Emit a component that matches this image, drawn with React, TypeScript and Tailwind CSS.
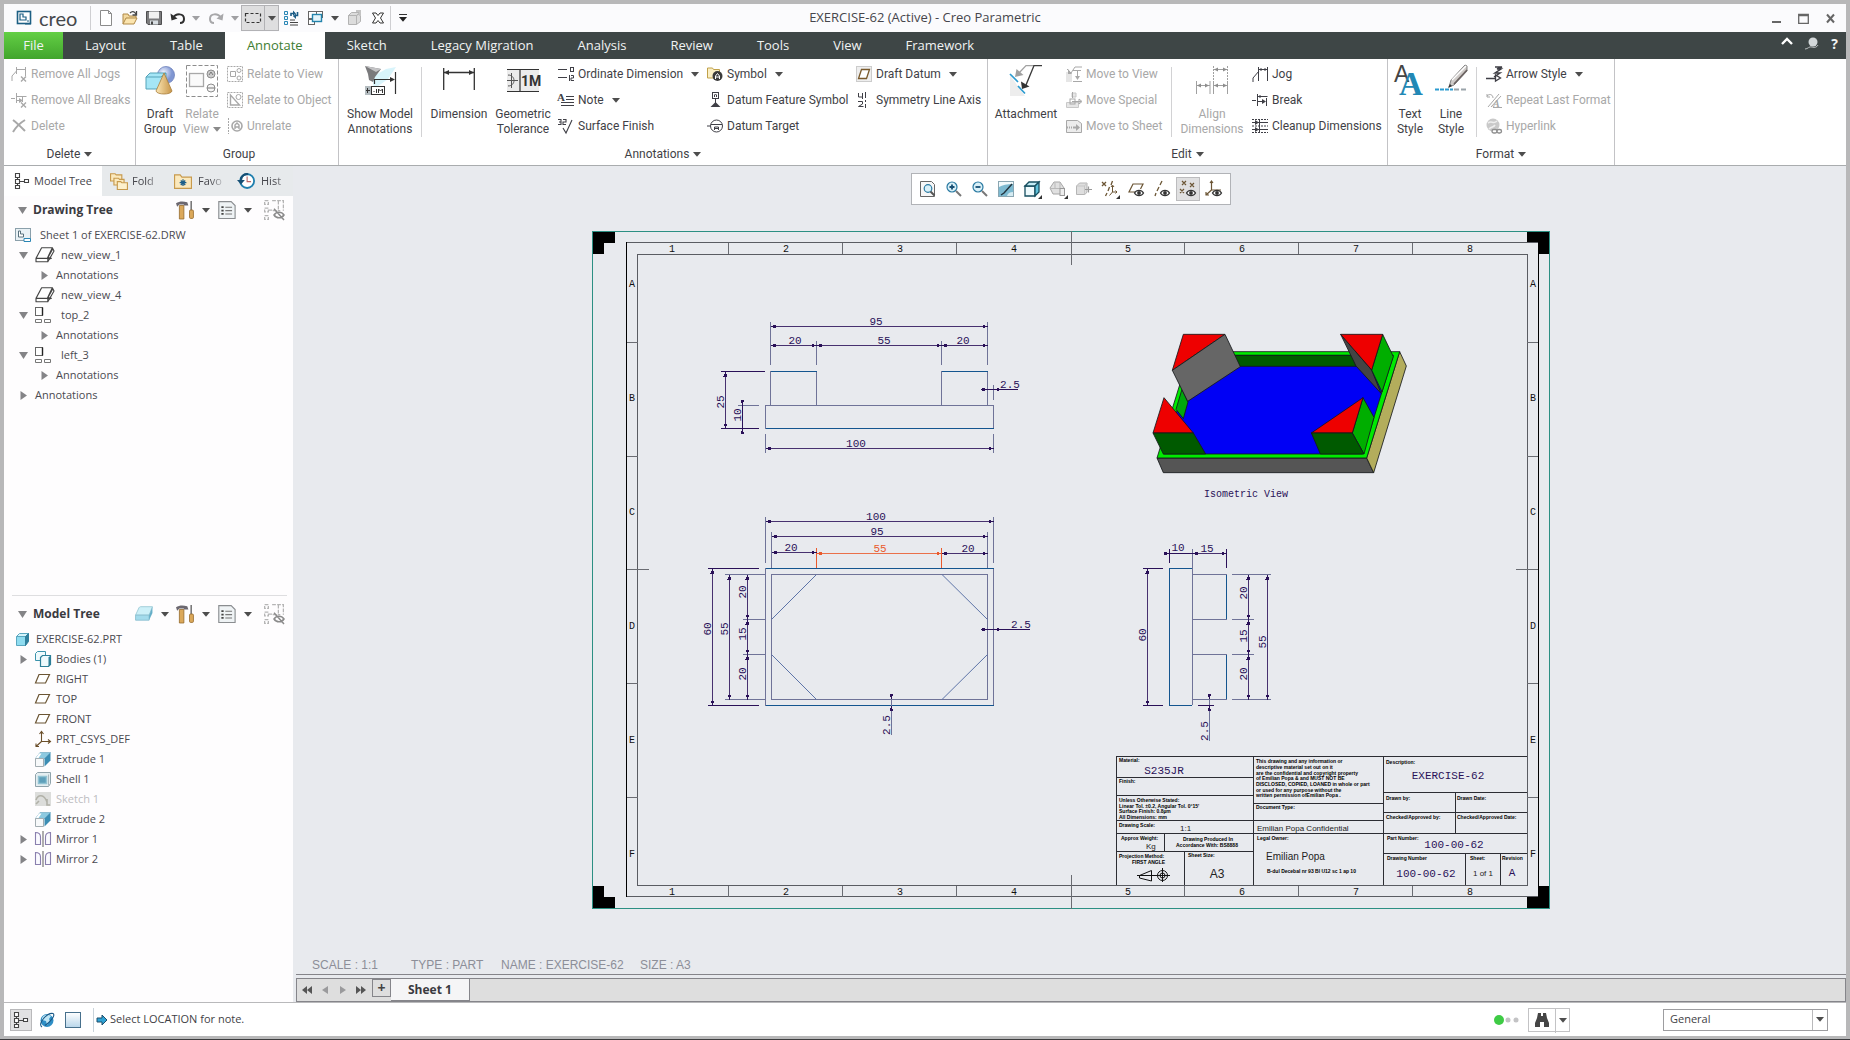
import { type ReactNode } from "react";
import clsx from "clsx";

const INK = "#2a1158";
const EDGE = "#14558f";
const THIN = "#6f7398";

/* ---------- small icons (16 x 16) ---------- */

const small: Record<string, ReactNode> = {
  logo: (
    <>
      <rect x="1.5" y="1.5" width="13" height="12" fill="#fff" stroke="#1d5f84" strokeWidth="1.6" />
      <path d="M4 4v6h6V7H7V4zM9 14h6M11 11h2" fill="none" stroke="#1d5f84" strokeWidth="1.2" />
    </>
  ),
  newFile: (
    <path d="M2.500.500h8l3 3v12h-11zM10.500.500v3h3" fill="#fff" stroke="#8b8b8b" />
  ),
  open: (
    <>
      <path d="M1 14V4h5l1 2h7v3" fill="#f3d9a0" stroke="#b08a48" />
      <path d="M1 14l3-6h11l-3 6z" fill="#fbe4ae" stroke="#b08a48" />
      <path d="M8 3c2-2 4-2 6 1M14.500 1v4h-4" fill="none" stroke="#444" strokeWidth="1.3" />
    </>
  ),
  save: (
    <>
      <path d="M.5 1.500h15v13H2l-1.500-1.500z" fill="#7b7b7d" stroke="#4e4e50" />
      <rect x="3" y="1.500" width="10" height="7" fill="#f1f1f1" />
      <rect x="4" y="10.500" width="8" height="4" fill="#d7dde2" />
      <rect x="5" y="11.500" width="2" height="3" fill="#444" />
    </>
  ),
  undo: (
    <>
      <path d="M3 8c3-5 11-5 11 1 0 3-2 4-4 4" fill="none" stroke="#2f2f2f" strokeWidth="2" />
      <path d="M.5 3.500l1 7 6-2z" fill="#2f2f2f" />
    </>
  ),
  redo: (
    <>
      <path d="M13 8C10 3 2 3 2 9c0 3 2 4 4 4" fill="none" stroke="#a8a8aa" strokeWidth="2" />
      <path d="M15.500 3.500l-1 7-6-2z" fill="#a8a8aa" />
    </>
  ),
  marquee: (
    <rect x=".5" y="3.500" width="15" height="9" fill="none" stroke="#333" strokeWidth="1.200" strokeDasharray="3 2" />
  ),
  regen: (
    <>
      <path d="M1.500 1.500h3v3h-3zM1.500 6.500h3v3h-3zM1.500 11.500h3v3h-3z" fill="#eef7fb" stroke="#2a86b5" />
      <path d="M7 12.500h8M7 15h8M7 10h5" stroke="#444" />
      <path d="M8 6V3.500h3M14.500 2v3.500H12" fill="none" stroke="#1b5c86" strokeWidth="1.600" />
      <path d="M10 .5l3 3-3 3zM13 3l-3 3 3 3z" fill="#1b5c86" />
    </>
  ),
  windows: (
    <>
      <rect x="1.500" y="1.500" width="8" height="7" fill="#fff" stroke="#666" />
      <rect x="1.500" y="9.500" width="6" height="5" fill="#fff" stroke="#666" />
      <rect x="9.500" y="1.500" width="6" height="6" fill="#fff" stroke="#666" />
      <rect x="5.500" y="4.500" width="9" height="7" fill="#e3f4fa" stroke="#2384ac" strokeWidth="1.400" />
    </>
  ),
  boxGray: (
    <>
      <path d="M1.500 5.500h8v9h-8zM1.500 5.500l3-3h9l-4 3zM9.500 5.500l4-3v9l-4 3" fill="#dcdcdc" stroke="#b3b3b3" />
      <path d="M9 1h4v5" fill="none" stroke="#c4c4c4" strokeWidth="2" />
    </>
  ),
  closeWin: (
    <path d="M2.500 3h3.500l2 2.500L10 3h3.500L10.500 8l3 5H10L8 10.500 6 13H2.500l3-5z" fill="#fff" stroke="#333" />
  ),
  jogs: (
    <>
      <path d="M5.500 1v7M14.500 1v9M5.500 3.500h9M1 15V10l4.500-5" fill="none" stroke="currentColor" />
      <path d="M10 10.500l5 5M15 10.500l-5 5" stroke="currentColor" strokeWidth="1.400" />
    </>
  ),
  breaks: (
    <>
      <path d="M0 6.500h4M5.500 1v10M11.500 4v6M5.500 4.500h10M6 8.500h4" fill="none" stroke="currentColor" />
      <path d="M8 6l4 2.500L8 11z" fill="currentColor" />
      <path d="M10 10.500l5 5M15 10.500l-5 5" stroke="currentColor" strokeWidth="1.400" />
    </>
  ),
  cross: <path d="M2 2c4 3 8 7 12 11M14 2C9 5 5 9 2 14" fill="none" stroke="currentColor" strokeWidth="2" />,
  relView: (
    <>
      <rect x=".5" y=".5" width="15" height="15" fill="none" stroke="currentColor" strokeDasharray="2 1" />
      <path d="M3.500 5.500h5v5h-5z" fill="none" stroke="currentColor" />
      <circle cx="12" cy="4.500" r="2" fill="none" stroke="currentColor" />
      <circle cx="12" cy="12" r="2" fill="none" stroke="currentColor" />
    </>
  ),
  relObj: (
    <>
      <rect x=".5" y=".5" width="15" height="15" fill="none" stroke="currentColor" strokeDasharray="2 1" />
      <path d="M3.500 3v10h9z" fill="none" stroke="currentColor" strokeWidth="1.400" />
      <circle cx="11.500" cy="5" r="2.500" fill="none" stroke="currentColor" />
    </>
  ),
  unrelate: (
    <>
      <path d="M1.500 0v16" stroke="currentColor" strokeDasharray="2 1" />
      <circle cx="10" cy="8" r="5" fill="none" stroke="currentColor" strokeWidth="1.600" />
      <path d="M8 11V7l2-2 2 2v4M8 9h4" fill="none" stroke="currentColor" strokeWidth="1.400" />
    </>
  ),
  ordinate: (
    <>
      <path d="M0 3.500h9M0 11.500h9" stroke="currentColor" />
      <rect x="12.500" y="1.500" width="3" height="4" fill="none" stroke="currentColor" />
      <path d="M11.500 9v6M13 9.500h2.500v2.500H13v2.500h3" fill="none" stroke="currentColor" />
    </>
  ),
  note: (
    <>
      <text x="-1" y="9" fontSize="11" fontWeight="700" fontFamily="Liberation Serif, serif" fill="currentColor">A</text>
      <path d="M8 4.500h8M8 7.500h8M3 10.500h13M3 13.500h13" stroke="currentColor" />
    </>
  ),
  surface: (
    <>
      <path d="M0 1.500h3v5H0M1 4h2M5 1.500h3V4H5v2.500h3M5 10l3 5 6-13" fill="none" stroke="currentColor" strokeWidth="1.100" />
    </>
  ),
  symbol: (
    <>
      <path d="M.5 12V2h5l1 1.500h6V12z" fill="#fbefc4" stroke="#c0a14a" />
      <circle cx="10.500" cy="10" r="5" fill="#3b3b3b" />
      <path d="M8.500 13v-3l2-2.500 2 2.500v3M8.500 11h4" fill="none" stroke="#fff" />
    </>
  ),
  datumFeature: (
    <>
      <rect x="5.500" y=".5" width="6" height="6" fill="none" stroke="currentColor" />
      <path d="M8.500 7v4M7.500 5V3l1-1 1 1v2" stroke="currentColor" fill="none" />
      <path d="M8.500 10l5 5h-10z" fill="currentColor" />
    </>
  ),
  datumTarget: (
    <>
      <circle cx="9.500" cy="8" r="6" fill="none" stroke="currentColor" />
      <path d="M0 8h3M4 6.500h11M7.500 12V9h4v3M7.500 10.500h4" fill="none" stroke="currentColor" />
    </>
  ),
  draftDatum: (
    <>
      <rect x=".5" y=".5" width="15" height="15" fill="#eee" stroke="#ccc" />
      <path d="M5.500 3.500h8l-3 9h-8z" fill="#fff" stroke="#7a5a2c" strokeWidth="1.300" />
    </>
  ),
  symmetry: (
    <>
      <path d="M2.500 1v4h4M6.500 1v6M2 9.500h4.500V12l-4 2.500h5" fill="none" stroke="currentColor" />
      <path d="M9.500 0v16" stroke="currentColor" strokeDasharray="6 2 2 2" />
    </>
  ),
  moveView: (
    <>
      <path d="M0 6h6v10H0z" fill="#e6e6e6" />
      <path d="M1 3l4 4 4-6h7M7 4.500h8M11.500 5v8M7 15.500h9" fill="none" stroke="currentColor" />
      <path d="M9 10h5l-2.500 4zM2 3v5h4z" fill="currentColor" />
    </>
  ),
  moveSpecial: (
    <>
      <path d="M.5 10.500h12v5H.5zM6 1l4 0v4H6z" fill="#e6e6e6" stroke="#c8c8c8" />
      <rect x="4" y="7" width="5" height="5" fill="none" stroke="currentColor" />
      <path d="M6.500 0v6M6 9.500h9M13 7l3 2.500L13 12z" fill="none" stroke="currentColor" />
    </>
  ),
  moveSheet: (
    <>
      <path d="M.5 2.500h11l4 3v9H.5z" fill="#ececec" stroke="currentColor" />
      <path d="M1 9.500h6" stroke="currentColor" strokeWidth="2" strokeDasharray="1 1" />
      <path d="M7 8.500h3V6l4 3.500-4 3.500v-2.500H7z" fill="currentColor" />
    </>
  ),
  jog: <path d="M6.500 1v14M15.500 1v14M6.500 3.500h9M9 2v3M13 2v3M1 16v-4l6-7" fill="none" stroke="currentColor" />,
  breakIcon: (
    <>
      <path d="M0 8.500h4M5.500 2v12M5.500 4.500h10M8 3v3M14.500 6v8M6 9.500h4" fill="none" stroke="currentColor" />
      <path d="M10 7l4 2.500-4 2.500z" fill="currentColor" />
    </>
  ),
  cleanup: (
    <>
      <path d="M0 4.500h16M0 11.500h16M7.500 1v14" stroke="currentColor" />
      <path d="M0 1.500h16M0 8h16M0 14.500h16" stroke="currentColor" strokeDasharray="2 1" />
      <path d="M3 2l4 2.500L3 7zM3 9l4 2.500L3 14z" fill="currentColor" />
    </>
  ),
  arrowStyle: (
    <>
      <path d="M0 12.500h9M9.500 9v6l5-3z" fill="none" stroke="currentColor" strokeWidth="1.300" />
      <path d="M9 1h7l-5 2h4l-6 4h5l-6 4" fill="none" stroke="currentColor" strokeWidth="1.500" />
    </>
  ),
  repeat: (
    <>
      <path d="M1 2v3h3M1 4c3-3 6-1 6 2M2 15L13 2M5 15L15 4" fill="none" stroke="currentColor" />
      <text x="7" y="15" fontSize="10" fontStyle="italic" fontWeight="700" fontFamily="Liberation Serif, serif" fill="currentColor">A</text>
      <path d="M7 15.500h9" stroke="currentColor" />
    </>
  ),
  hyperlink: (
    <>
      <circle cx="7" cy="7" r="6.500" fill="#c9c9c9" />
      <path d="M2 5c4-3 5 2 9-2M3 11c3-3 4-1 6-4" stroke="#eee" fill="none" strokeWidth="1.600" />
      <rect x="6" y="11.500" width="5" height="3.500" rx="1.700" fill="#fff" stroke="#8f8f8f" strokeWidth="1.400" />
      <rect x="11" y="11.500" width="4.500" height="3.500" rx="1.700" fill="#fff" stroke="#8f8f8f" strokeWidth="1.400" />
    </>
  ),
  tree: (
    <path d="M1.500.500h4v4h-4zM1.500 6.500h4v4h-4zM1.500 12.500h4v3h-4zM10.500 6.500h4v3h-4zM3.500 4.500v2M3.500 10.500v2M5.500 8.500h5" fill="#fff" stroke="#444" strokeWidth="1.100" />
  ),
  folders: (
    <>
      <path d="M.5 8V1.500h4l1 1h5V8z" fill="#fbe9bd" stroke="#c79a4d" />
      <path d="M3.500 11.500v-6h4l1 1h4v5z" fill="#fbe9bd" stroke="#c79a4d" />
      <path d="M6.500 15.500v-7h3l1 1h5v6z" fill="#fdf0cc" stroke="#c79a4d" />
    </>
  ),
  favorite: (
    <>
      <path d="M.5 14.500v-12h5l1.500 2h8.500v10z" fill="#fbe9bd" stroke="#c79a4d" />
      <path d="M8 6.500v6M5 9.500h6M6 7.500l4 4M10 7.500l-4 4" stroke="#1c5f8a" strokeWidth="1.100" />
    </>
  ),
  history: (
    <>
      <circle cx="9" cy="8" r="6.200" fill="#fff" stroke="#1f7fae" strokeWidth="1.600" />
      <path d="M9 4v4.500h3.500" fill="none" stroke="#b66" />
      <path d="M0 7l3.500 4L7 7z" fill="#174f74" />
      <path d="M3.500 7C4 3 7 1.500 10 2" fill="none" stroke="#174f74" strokeWidth="2" />
    </>
  ),
  hammer: (
    <>
      <path d="M0 2c3-2 6-2 10-1l1 3H7V3H3L1 5z" fill="#6c6870" />
      <path d="M3 4h4v12H3z" fill="#dba85a" stroke="#94682b" strokeWidth=".7" />
      <path d="M13.500 0v8" stroke="#777" strokeWidth="1.400" />
      <rect x="12" y="8" width="3.500" height="7.500" rx="1" fill="#dba85a" stroke="#94682b" strokeWidth=".7" />
    </>
  ),
  listDoc: (
    <>
      <path d="M.7.500h11l3.500 3.500v11.500H.7z" fill="#eff3f5" stroke="#8a8d90" />
      <path d="M6.500 5.500h6M6.500 8.500h6M6.500 11.500h6" stroke="#777" />
      <path d="M3 5.500h2M3 8.500h2M3 11.500h2" stroke="#444" strokeWidth="1.600" />
    </>
  ),
  treeHide: (
    <>
      <path d="M.5.500h3v3h-3zM.5 6.500h3v3h-3zM.5 12.500h3v3h-3zM3.500 8h4M6.500.500h9v8M11.500.500v8M7 8.500h6" fill="none" stroke="#b5b5b5" strokeDasharray="3 1" />
      <path d="M8 12c2-3 6-3 8 0-2 3-6 3-8 0zM8 7l8 9" fill="none" stroke="#8b8b8b" strokeWidth="1.200" />
    </>
  ),
  sheet: (
    <>
      <rect x=".5" y="1.500" width="15" height="12" fill="#e9f1f5" stroke="#8ba0ab" />
      <path d="M3.500 4v6h5V7h-3V4z" fill="#fff" stroke="#58707c" />
      <path d="M9 14.500v-3h6.500v3z" fill="#fff" stroke="#2a86b5" />
    </>
  ),
  view3d: (
    <path d="M0 11l5-9.500h9.500L10 11zM0 11v3h10.500V11M10.500 14l5.500-9.500-1.500-3M10.500 11l3.500 0M12.500 12L11 9.500 15 2.500" fill="#fff" stroke="#444" strokeLinejoin="round" />
  ),
  viewPlan: (
    <>
      <rect x=".5" y=".5" width="7" height="8" fill="#fff" stroke="#666" />
      <path d="M7.500.500v8" stroke="#222" strokeWidth="1.400" />
      <path d="M.5 12.500h6v3h-6zM9.500 12.500h6v3h-6z" fill="#fff" stroke="#777" />
    </>
  ),
  part: (
    <>
      <path d="M1.500 5.500h9v9h-9z" fill="#8fdcf0" stroke="#5aa7c0" />
      <path d="M1.500 5.500l3-3h9l-3 3z" fill="#d3f3fa" stroke="#5aa7c0" />
      <path d="M10.500 5.500l3-3v8l-3 4z" fill="#2f7f9c" stroke="#2f7f9c" />
    </>
  ),
  bodies: (
    <>
      <path d="M.5 2.500l2-2h8v9h-10z" fill="#eefafd" stroke="#3b93ab" />
      <path d="M5.500 6.500l2-2h8v9l-2 2h-8z" fill="#eefafd" stroke="#2d7f98" strokeWidth="1.200" />
      <path d="M13.500 6.500v9l2-2v-9z" fill="#2d7f98" />
    </>
  ),
  plane: <path d="M4 3.500h10.500l-4 8.500H.5z" fill="#fff" stroke="#6b5534" strokeWidth="1.200" />,
  csys: (
    <path d="M6.500 1v9.500H15M6.500 10.500L1 15.500M4.500 3l2-2.500 2 2.500M13 8.500l2.500 2-2.500 2M1 12.500v3h3" fill="none" stroke="#6b4f2a" strokeWidth="1.100" />
  ),
  extrude: (
    <>
      <path d="M.5 7.500l4.500-6h10.500l-6 6z" fill="#8cc9e0" stroke="#7fb4c9" strokeWidth=".8" />
      <path d="M9.500 7.500l6-6v8l-6 6z" fill="#3b8db3" />
      <path d="M.5 7.500h8v8h-8z" fill="#f7f9fa" stroke="#a3adb2" />
      <path d="M1 7l3-4.500h2.500L3.500 7z" fill="#fff" />
    </>
  ),
  shell: (
    <>
      <path d="M.5 3.500l2-2h13v11l-2 3H.5z" fill="#e4eef1" stroke="#8fa3ab" />
      <path d="M3.500 5.500h8v7h-8z" fill="#5e9fba" stroke="#91c3d3" strokeWidth="1.500" />
      <path d="M13.500 3.500v11" stroke="#a9b7bc" />
    </>
  ),
  sketch: (
    <>
      <rect x="0" y="1" width="16" height="14" fill="#dcdddb" />
      <path d="M1 9c2-6 8-6 11 2M12 8v6h3M1 13l3-3" fill="none" stroke="#b1b1a8" strokeWidth="1.600" />
    </>
  ),
  mirror: (
    <>
      <path d="M.5 1.500v12h5V6q0-4.500-5-4.500zM15.500 1.500v12h-5V6q0-4.500 5-4.500z" fill="#fafaff" stroke="#8a7fae" strokeWidth="1.100" />
      <path d="M8 0v16" stroke="#6b6b6b" strokeWidth="1.100" />
    </>
  ),
  layer: (
    <>
      <path d="M.5 9l3-6.500q.5-1 1.500-1h10.500L12.500 9z" fill="#cdf0f8" stroke="#9cc9d6" strokeWidth=".8" />
      <path d="M.5 9v4.500h12V9z" fill="#a3dbec" stroke="#8bc0d0" strokeWidth=".8" />
      <path d="M12.500 9l3-7.500V7l-3 6.500z" fill="#66afc8" />
    </>
  ),
  zoomFit: (
    <>
      <path d="M.5.500h11l3 3v12H.500z" fill="#f7f7f7" stroke="#666" />
      <circle cx="8" cy="7.500" r="3.800" fill="#d9f0f8" stroke="#2a7aa2" strokeWidth="1.200" />
      <path d="M10.500 10.500l4 4" stroke="#555" strokeWidth="2" />
    </>
  ),
  zoomIn: (
    <>
      <circle cx="6" cy="6" r="5" fill="#d9f0f8" stroke="#2a7aa2" strokeWidth="1.200" />
      <path d="M3.500 6h5M6 3.500v5" stroke="#174f74" strokeWidth="1.800" />
      <path d="M10 10l5 5" stroke="#777" strokeWidth="2" />
    </>
  ),
  zoomOut: (
    <>
      <circle cx="6" cy="6" r="5" fill="#d9f0f8" stroke="#2a7aa2" strokeWidth="1.200" />
      <path d="M3.500 6h5" stroke="#174f74" strokeWidth="1.800" />
      <path d="M10 10l5 5" stroke="#777" strokeWidth="2" />
    </>
  ),
  repaint: (
    <>
      <rect x=".5" y=".5" width="15" height="15" fill="#d5ebf2" stroke="#8aa6b2" />
      <path d="M1 5q6-3 14-3v9q-5 0-6 4H1z" fill="#5fa9c6" opacity=".75" />
      <path d="M1 1h14v2Q6 3 1 6z" fill="#f2fafc" />
      <path d="M14 3L6 12l-3 2" fill="none" stroke="#23353f" strokeWidth="1.500" />
    </>
  ),
  cube: (
    <>
      <path d="M1 5h10v10H1z" fill="#eefafd" stroke="#174f60" strokeWidth="1.300" />
      <path d="M1 5l4-4h10l-4 4z" fill="#c4ecf5" stroke="#174f60" strokeWidth="1.300" />
      <path d="M11 5l4-4v10l-4 4z" fill="#5fc1da" stroke="#174f60" strokeWidth="1.300" />
      <Corner />
    </>
  ),
  savedView: (
    <>
      <path d="M0 7l4-6h6l4 6-2 6H3z" fill="#e0e0e0" stroke="#a6a6a6" />
      <path d="M0 7.500h14M5 2v5M10 2v5" stroke="#b9b9b9" />
      <rect x="10" y="7.500" width="4.500" height="7" fill="#eee" stroke="#999" />
      <Corner />
    </>
  ),
  section: (
    <>
      <path d="M.5 5l3-3h7.500v9l-2 2.500H.5z" fill="#dedede" stroke="#b5b5b5" />
      <path d="M.5 5h8v8.500M8.500 5l2.500-3" fill="none" stroke="#c6c6c6" />
      <path d="M9 8.500h7M12.500 5.500v6" stroke="#999" strokeWidth="1.200" />
    </>
  ),
  datumFilter: (
    <>
      <path d="M0 1l4 4M4 1L0 5M10.500 0L9 4M7.500 6L6 10M5 12l-1.500 3" stroke="#6b5534" strokeWidth="1.300" />
      <path d="M10.500 5v6H15M10.500 11l-3 3.500M9 6l1.500-2L12 6M13.500 9.500L15 11l-1.500 1.500" fill="none" stroke="#6b5534" />
      <Corner />
    </>
  ),
  planeEye: (
    <>
      <path d="M12.500 8l2.500-5H5l-4 8h6" fill="none" stroke="#6b5534" strokeWidth="1.200" />
      <Eye />
    </>
  ),
  axisEye: (
    <>
      <path d="M8 0L6 4M5 6l-2 4M2 12l-1 3" stroke="#6b5534" strokeWidth="1.300" />
      <Eye />
    </>
  ),
  pointEye: (
    <>
      <path d="M2 0l4 4M6 0L2 4M10 2l4 4M14 2l-4 4M0 8l4 4M4 8l-4 4" stroke="#6b5534" strokeWidth="1.200" />
      <Eye />
    </>
  ),
  csysEye: (
    <>
      <path d="M5.500 0v9H15M5.500 9L0 14M4 2l1.500-2L7 2M0 11v3h3" fill="none" stroke="#6b5534" strokeWidth="1.200" />
      <Eye />
    </>
  ),
  globe: (
    <>
      <circle cx="8" cy="8.500" r="6.500" fill="#2f8fc6" />
      <path d="M3 6c2-4 6-4 9-2l-2 3 1 2-3 4-1-4-4-1z" fill="#bfe6f5" />
      <path d="M3 15C-2 12 8 .5 14 1.500c3 1.500-3 9-8 12" fill="none" stroke="#1c5a88" strokeWidth="1.100" />
    </>
  ),
  pane: (
    <>
      <defs>
        <linearGradient id="pane" x1="0" y1="0" x2="0" y2="1">
          <stop offset="0" stopColor="#fff" />
          <stop offset="1" stopColor="#b8d6ea" />
        </linearGradient>
      </defs>
      <rect x=".5" y=".5" width="15" height="15" fill="url(#pane)" stroke="#47708c" />
    </>
  ),
  binoculars: (
    <path d="M4 1h3v3h2V1h3l1 5 2 5v4h-5v-5H6v5H1v-4l2-5z" fill="#454545" />
  ),
};

function Corner() {
  return <path d="M18 14v4h-4z" fill="#333" />;
}

function Eye() {
  return (
    <>
      <path d="M6.500 12c2-3.500 7-3.500 9 0-2 3.500-7 3.500-9 0z" fill="#fff" stroke="#333" strokeWidth="1.300" />
      <circle cx="11" cy="12" r="1.900" fill="#333" />
    </>
  );
}

function Icon({ name, className = "size-4" }: { name: string; className?: string }) {
  return (
    <svg viewBox="0 0 16 16" className={clsx("shrink-0 overflow-visible", className)} aria-hidden="true">
      {small[name]}
    </svg>
  );
}

function Caret({ className = "text-[#4d4d4d]" }: { className?: string }) {
  return (
    <svg viewBox="0 0 8 5" className={clsx("h-[5px] w-2 shrink-0", className)} aria-hidden="true">
      <path d="M0 0h8L4 4.800z" fill="currentColor" />
    </svg>
  );
}

/* ---------- large ribbon icons (32 x 32) ---------- */

const large: Record<string, ReactNode> = {
  draftGroup: (
    <>
      <defs>
        <radialGradient id="ball" cx=".35" cy=".35">
          <stop offset="0" stopColor="#f2f5ff" />
          <stop offset="1" stopColor="#7f96d2" />
        </radialGradient>
        <linearGradient id="cone">
          <stop offset="0" stopColor="#fbe6b4" />
          <stop offset="1" stopColor="#c79548" />
        </linearGradient>
      </defs>
      <circle cx="22" cy="10" r="8.500" fill="url(#ball)" stroke="#6d82bb" strokeWidth=".8" />
      <path d="M2 12l4-4h16v12l-4 4H2z" fill="#a5e6f6" stroke="#55a3b9" />
      <path d="M2 12h15l5-4" fill="none" stroke="#55a3b9" />
      <path d="M20 8l8 18c-1 4-15 4-16 0z" fill="url(#cone)" stroke="#a97f3c" strokeWidth=".8" />
    </>
  ),
  relateView: (
    <>
      <rect x=".5" y=".5" width="31" height="31" fill="none" stroke="#8d8d8d" strokeDasharray="4 2" />
      <rect x="3.500" y="8.500" width="14" height="13" fill="#fafafa" stroke="#a8a8a8" strokeWidth="1.300" />
      <circle cx="25" cy="9" r="4" fill="#ccc" stroke="#8d8d8d" />
      <circle cx="25" cy="23" r="4" fill="#f4f4f4" stroke="#8d8d8d" />
      <path d="M23 10l2-3 2 3M21 23h8" fill="none" stroke="#777" />
    </>
  ),
  showModel: (
    <>
      <path d="M8 12L22 4l10-2-8 12-14 10z" fill="#c7effa" opacity=".7" />
      <path d="M1 1l16 3-6 8-2 5-4-2-1-6z" fill="#7a7a7c" />
      <path d="M1 1l16 3-5 3z" fill="#c3c3c5" />
      <path d="M31.500 7v22M10 14.500h20M10.500 14v5" stroke="#333" strokeWidth="1.200" />
      <path d="M26 12l5 2.500-5 2.500z" fill="#333" />
      <rect x="1.500" y="21.500" width="19" height="8" fill="#fff" stroke="#333" />
      <rect x="1" y="21" width="6" height="9" fill="#b4bcc0" />
      <path d="M7.500 21v9M10 27v-1M12.500 24v4M14.500 28v-4l2 2 2-2v4M3.500 23v5M2 25.500h4" stroke="#333" fill="none" />
    </>
  ),
  dimension: (
    <>
      <path d="M.7 3v22M31.300 3v22M1 7.500h30" stroke="#333" strokeWidth="1.300" />
      <path d="M1 7.500l5-2.500v5zM31 7.500L26 5v5z" fill="#333" />
    </>
  ),
  geomTol: (
    <>
      <rect x="0" y="4" width="32" height="22" fill="#ececec" />
      <path d="M0 4.500h32M0 26.500h32" stroke="#333" strokeWidth="1.200" />
      <path d="M13 5v21" stroke="#555" strokeWidth="1.500" />
      <path d="M0 15.500h11M4.500 8v15M1 10c8 0 8 11 0 11" fill="none" stroke="#555" />
      <text x="14" y="21" fontSize="14" fontWeight="700" fontFamily="Roboto, sans-serif" fill="#333">1M</text>
    </>
  ),
  attachment: (
    <>
      <path d="M0 10L15 31H0z" fill="#ededed" />
      <path d="M24 .6h-8L9 8" fill="none" stroke="#a2a2a2" strokeWidth="1.300" />
      <path d="M5 12l1.500-8 7 6z" fill="#a0a0a0" />
      <path d="M32 .6h-8L16 20" fill="none" stroke="#3c3c3c" strokeWidth="1.400" />
      <path d="M12 24l-1-7.500 8.500 5z" fill="#333" />
      <path d="M0 9l8 8M8 21l7 7.500" stroke="#2c9bd0" strokeWidth="1.700" />
    </>
  ),
  alignDim: (
    <>
      <path d="M.5 16v13M14 16v13M17.500 16v13M31.500 16v13" stroke="#a0a0a0" />
      <path d="M17.500 1v14M31.500 1v14" stroke="#a0a0a0" strokeDasharray="2 1" />
      <path d="M1 20.500h13M18 20.500h13M18 4.500h13" stroke="#a0a0a0" />
      <path d="M1 20.500l4-2v4zM13 20.500l-4-2v4zM18 20.500l4-2v4zM31 20.500l-4-2v4zM18 4.500l4-2v4zM31 4.500l-4-2v4z" fill="#8d8d8d" />
    </>
  ),
  textStyle: (
    <>
      <text x="0" y="17" fontSize="23" fontFamily="Liberation Sans, sans-serif" fill="#444">A</text>
      <text x="5" y="30" fontSize="33" fontWeight="700" fontFamily="Liberation Serif, serif" fill="#2288b5">A</text>
    </>
  ),
  lineStyle: (
    <>
      <path d="M0 24.500h18" stroke="#2c9bd0" strokeWidth="2" strokeDasharray="4 1" />
      <path d="M19 24.500h13" stroke="#9aa4aa" strokeWidth="2" strokeDasharray="5 2" />
      <path d="M14 22l2-7L30 0l2 1v5L19 20z" fill="#cfcbc8" stroke="#777" strokeWidth=".9" />
      <path d="M17 15L31 1" stroke="#fff" strokeWidth="1.500" />
      <path d="M19 19L32 5" stroke="#6b6260" strokeWidth="1.600" />
      <path d="M13 23l2-4 2 2z" fill="#333" />
    </>
  ),
};

/* ---------- ribbon ---------- */

type ToolProps = { icon: string; label: string; caret?: boolean; disabled?: boolean };

function Tool({ icon, label, caret, disabled }: ToolProps) {
  return (
    <button
      type="button"
      disabled={disabled}
      className={clsx(
        "flex h-[26px] items-center gap-1 text-left text-xs whitespace-nowrap",
        disabled ? "text-[#a8a8a8]" : "text-[#3f3f46]",
      )}
    >
      <Icon name={icon} />
      {label}
      {caret ? <span className="pl-1"><Caret /></span> : null}
    </button>
  );
}

function BigTool({ icon, lines, className, disabled, caret }: {
  icon: string;
  lines: string[];
  className: string;
  disabled?: boolean;
  caret?: boolean;
}) {
  return (
    <button
      type="button"
      disabled={disabled}
      className={clsx(
        "flex shrink-0 flex-col items-center self-start pt-1 text-xs leading-[15px] whitespace-nowrap",
        disabled ? "text-[#a8a8a8]" : "text-[#3f3f46]",
        className,
      )}
    >
      <svg viewBox="0 0 32 32" className="mb-2.5 size-8 overflow-visible" aria-hidden="true">
        {large[icon]}
      </svg>
      {lines.map((line, i) => (
        <span key={line} className="flex items-center gap-1">
          {line}
          {caret && i === lines.length - 1 ? <Caret className="text-[#8a8a8a]" /> : null}
        </span>
      ))}
    </button>
  );
}

function Group({ title, caret, className, children }: {
  title: string;
  caret?: boolean;
  className: string;
  children: ReactNode;
}) {
  return (
    <section className={clsx("flex shrink-0 flex-col border-r border-[#c3c3c6] pt-0.5", className)}>
      <div className="flex h-20">{children}</div>
      <button type="button" className="mt-[3px] flex h-5 items-center justify-center gap-1 text-xs text-[#3f3f46]">
        {title}
        {caret ? <Caret /> : null}
      </button>
    </section>
  );
}

function Divider({ className }: { className?: string }) {
  return <div className={clsx("mt-1.5 h-[70px] w-px shrink-0 bg-[#d2d2d4]", className)} />;
}

function Ribbon() {
  return (
    <div className="flex h-[107px] shrink-0 overflow-hidden border-b border-[#a9acae] bg-white font-['Roboto',sans-serif]">
      <Group title="Delete" caret className="w-[132px]">
        <div className="flex flex-col pl-[7px]">
          <Tool icon="jogs" label="Remove All Jogs" disabled />
          <Tool icon="breaks" label="Remove All Breaks" disabled />
          <Tool icon="cross" label="Delete" disabled />
        </div>
      </Group>
      <Group title="Group" className="w-[203px] pl-1">
        <BigTool icon="draftGroup" lines={["Draft", "Group"]} className="w-10" />
        <BigTool icon="relateView" lines={["Relate", "View"]} className="w-11" disabled caret />
        <div className="flex flex-col pl-[3px]">
          <Tool icon="relView" label="Relate to View" disabled />
          <Tool icon="relObj" label="Relate to Object" disabled />
          <Tool icon="unrelate" label="Unrelate" disabled />
        </div>
      </Group>
      <Group title="Annotations" caret className="w-[649px]">
        <BigTool icon="showModel" lines={["Show Model", "Annotations"]} className="w-[82px]" />
        <Divider />
        <BigTool icon="dimension" lines={["Dimension"]} className="w-[74px]" />
        <BigTool icon="geomTol" lines={["Geometric", "Tolerance"]} className="w-[54px]" />
        <div className="ml-2 flex w-[149px] flex-col">
          <Tool icon="ordinate" label="Ordinate Dimension" caret />
          <Tool icon="note" label="Note" caret />
          <Tool icon="surface" label="Surface Finish" />
        </div>
        <div className="flex w-[149px] flex-col">
          <Tool icon="symbol" label="Symbol" caret />
          <Tool icon="datumFeature" label="Datum Feature Symbol" />
          <Tool icon="datumTarget" label="Datum Target" />
        </div>
        <div className="flex flex-col">
          <Tool icon="draftDatum" label="Draft Datum" caret />
          <Tool icon="symmetry" label="Symmetry Line Axis" />
        </div>
      </Group>
      <Group title="Edit" caret className="w-[400px]">
        <BigTool icon="attachment" lines={["Attachment"]} className="w-[76px]" />
        <div className="ml-0.5 flex w-[105px] flex-col">
          <Tool icon="moveView" label="Move to View" disabled />
          <Tool icon="moveSpecial" label="Move Special" disabled />
          <Tool icon="moveSheet" label="Move to Sheet" disabled />
        </div>
        <Divider />
        <BigTool icon="alignDim" lines={["Align", "Dimensions"]} className="w-20" disabled />
        <div className="flex flex-col">
          <Tool icon="jog" label="Jog" />
          <Tool icon="breakIcon" label="Break" />
          <Tool icon="cleanup" label="Cleanup Dimensions" />
        </div>
      </Group>
      <Group title="Format" caret className="w-[227px]">
        <BigTool icon="textStyle" lines={["Text", "Style"]} className="w-11" />
        <BigTool icon="lineStyle" lines={["Line", "Style"]} className="w-[38px]" />
        <Divider className="ml-1.5" />
        <div className="ml-[9px] flex flex-col">
          <Tool icon="arrowStyle" label="Arrow Style" caret />
          <Tool icon="repeat" label="Repeat Last Format" disabled />
          <Tool icon="hyperlink" label="Hyperlink" disabled />
        </div>
      </Group>
    </div>
  );
}

/* ---------- title bar and tabs ---------- */

function QuickButton({ icon, label, className = "w-6" }: { icon: string; label: string; className?: string }) {
  return (
    <button type="button" aria-label={label} className={clsx("flex h-6 items-center justify-center", className)}>
      <Icon name={icon} />
    </button>
  );
}

function CaretButton({ label, className, caret }: { label: string; className: string; caret?: string }) {
  return (
    <button type="button" aria-label={label} className={clsx("flex h-6 items-center justify-center", className)}>
      <Caret className={caret} />
    </button>
  );
}

function TitleBar() {
  return (
    <header className="grid h-7 shrink-0 grid-cols-[1fr_auto_1fr] items-center bg-[#fbfbfd]">
      <div className="flex items-center">
        <Icon name="logo" className="ml-3 size-4" />
        <span className="ml-[7px] w-10 font-['Lato',sans-serif] text-xl leading-5 text-[#45484c]">creo</span>
        <div className="ml-[11px] h-6 w-px bg-[#cfcfd2]" />
        <div className="ml-[3px] flex items-center">
          <QuickButton icon="newFile" label="New" />
          <QuickButton icon="open" label="Open" />
          <QuickButton icon="save" label="Save" />
          <QuickButton icon="undo" label="Undo" />
          <CaretButton label="Undo list" className="w-3" caret="text-[#a0a0a3]" />
          <QuickButton icon="redo" label="Redo" className="w-7" />
          <CaretButton label="Redo list" className="w-2.5" caret="text-[#a0a0a3]" />
        </div>
        <div className="ml-px flex border border-[#b2b2b5] bg-[#dededf]">
          <QuickButton icon="marquee" label="Selection" className="w-[22px]" />
          <CaretButton label="Selection list" className="w-[14px] border-l border-[#b2b2b5]" />
        </div>
        <QuickButton icon="regen" label="Regenerate" />
        <QuickButton icon="windows" label="Windows" />
        <CaretButton label="Window list" className="w-4" />
        <QuickButton icon="boxGray" label="Component" className="w-6" />
        <QuickButton icon="closeWin" label="Close window" className="w-[22px]" />
        <div className="ml-px h-6 w-px bg-[#cfcfd2]" />
        <button type="button" aria-label="Customize" className="ml-1 flex h-6 w-4 flex-col items-center justify-center gap-0.5">
          <span className="h-px w-2 bg-[#333]" />
          <Caret className="text-[#222]" />
        </button>
      </div>
      <h1 className="text-[13px] text-[#46464c]">EXERCISE-62 (Active) - Creo Parametric</h1>
      <div className="flex justify-end gap-4 pr-2.5 text-[#666]">
        <button type="button" aria-label="Minimize">
          <svg viewBox="0 0 11 11" className="size-[11px]"><path d="M1 9h9" stroke="currentColor" strokeWidth="2" /></svg>
        </button>
        <button type="button" aria-label="Maximize">
          <svg viewBox="0 0 11 11" className="size-[11px]">
            <path d="M.7 1.500h9.600v8.800H.7zM.7 2.500h9.600" fill="none" stroke="currentColor" strokeWidth="1.300" />
          </svg>
        </button>
        <button type="button" aria-label="Close">
          <svg viewBox="0 0 11 11" className="size-[11px]"><path d="M2 1.500l7 8M9 1.500l-7 8" stroke="currentColor" strokeWidth="2" /></svg>
        </button>
      </div>
    </header>
  );
}

const tabs = ["Layout", "Table", "Annotate", "Sketch", "Legacy Migration", "Analysis", "Review", "Tools", "View", "Framework"];

function TabBar() {
  return (
    <nav className="flex h-[27px] shrink-0 items-stretch bg-[#3e4646] text-[13px] text-[#f1f3f3]">
      <a href="#file" className="flex w-[59px] items-center justify-center bg-linear-to-b from-[#63cf45] to-[#41a52c] pt-px">
        File
      </a>
      {tabs.map((tab) => (
        <a
          key={tab}
          href={`#${tab.toLowerCase().replace(" ", "-")}`}
          className={clsx(
            "flex items-center px-[22px] pt-px whitespace-nowrap",
            tab === "Annotate" && "bg-white text-[#3e7d31]",
          )}
        >
          {tab}
        </a>
      ))}
      <div className="ml-auto flex items-start gap-3 pt-1 pr-2">
        <button type="button" aria-label="Collapse ribbon">
          <svg viewBox="0 0 12 12" className="size-3"><path d="M1 8l5-5 5 5" fill="none" stroke="#fff" strokeWidth="2.400" /></svg>
        </button>
        <button type="button" aria-label="Search">
          <svg viewBox="0 0 14 14" className="size-3.5">
            <circle cx="8" cy="6" r="4.500" fill="#d3d8da" />
            <path d="M0 13c3 0 4-3 7-2s5 0 6-2" fill="none" stroke="#b9bdbe" />
          </svg>
        </button>
        <button type="button" aria-label="Help" className="text-sm leading-4 font-bold">?</button>
      </div>
    </nav>
  );
}

/* ---------- side panel ---------- */

type Row = { label: string; icon?: string; level: number; arrow?: "open" | "closed"; dim?: boolean; gap?: boolean };

const drawingRows: Row[] = [
  { label: "new_view_1", icon: "view3d", level: 1, arrow: "open", gap: true },
  { label: "Annotations", level: 2, arrow: "closed" },
  { label: "new_view_4", icon: "view3d", level: 1, gap: true },
  { label: "top_2", icon: "viewPlan", level: 1, arrow: "open", gap: true },
  { label: "Annotations", level: 2, arrow: "closed" },
  { label: "left_3", icon: "viewPlan", level: 1, arrow: "open", gap: true },
  { label: "Annotations", level: 2, arrow: "closed" },
  { label: "Annotations", level: 1, arrow: "closed" },
];

const modelRows: Row[] = [
  { label: "Bodies (1)", icon: "bodies", level: 1, arrow: "closed" },
  { label: "RIGHT", icon: "plane", level: 1 },
  { label: "TOP", icon: "plane", level: 1 },
  { label: "FRONT", icon: "plane", level: 1 },
  { label: "PRT_CSYS_DEF", icon: "csys", level: 1 },
  { label: "Extrude 1", icon: "extrude", level: 1 },
  { label: "Shell 1", icon: "shell", level: 1 },
  { label: "Sketch 1", icon: "sketch", level: 1, dim: true },
  { label: "Extrude 2", icon: "extrude", level: 1 },
  { label: "Mirror 1", icon: "mirror", level: 1, arrow: "closed" },
  { label: "Mirror 2", icon: "mirror", level: 1, arrow: "closed" },
];

function Triangle({ open }: { open: boolean }) {
  return (
    <svg viewBox="0 0 9 9" className="size-[9px] text-[#848487]" aria-hidden="true">
      <path d={open ? "M0 1h9L4.500 8z" : "M1.500 0v9L8 4.500z"} fill="currentColor" />
    </svg>
  );
}

function TreeRow({ row }: { row: Row }) {
  return (
    <li className={clsx("flex h-5 items-center", row.level === 1 ? "pl-[15px]" : "pl-9")}>
      <span className="flex h-4 w-4 items-center">
        {row.arrow ? <Triangle open={row.arrow === "open"} /> : null}
      </span>
      {row.icon ? (
        <span className={row.gap ? "w-[26px]" : "w-[21px]"}>
          <Icon name={row.icon} className={row.icon === "view3d" ? "h-[18px] w-5" : "size-4"} />
        </span>
      ) : null}
      <span className={row.dim ? "text-[#bcbcbe]" : undefined}>{row.label}</span>
    </li>
  );
}

function Tree({ title, root, rootIcon, rows, layer }: {
  title: string;
  root: string;
  rootIcon: string;
  rows: Row[];
  layer?: boolean;
}) {
  return (
    <section className="text-[11px] text-[#4a4a50]">
      <div className="flex h-7 items-center pl-3.5">
        <Triangle open />
        <h2 className="ml-1.5 text-xs font-bold text-[#3a3a40]">{title}</h2>
        <div className="ml-auto flex items-center pr-[9px]">
          {layer ? (
            <>
              <button type="button" aria-label="Layers"><Icon name="layer" className="h-[18px] w-5" /></button>
              <CaretButton label="Layer options" className="w-[22px]" />
            </>
          ) : null}
          <button type="button" aria-label={`${title} settings`}><Icon name="hammer" className="size-[18px]" /></button>
          <CaretButton label="Settings list" className="w-6" />
          <button type="button" aria-label={`${title} columns`}><Icon name="listDoc" className="size-[18px]" /></button>
          <CaretButton label="Column list" className="w-6" />
          <button type="button" aria-label="Hide items" className="pl-1"><Icon name="treeHide" className="size-5" /></button>
        </div>
      </div>
      <ul className="pt-px">
        <li className="flex h-5 items-center pl-[11px]">
          <Icon name={rootIcon} />
          <span className={layer ? "ml-[5px]" : "ml-[9px]"}>{root}</span>
        </li>
        {rows.map((row, i) => (
          <TreeRow key={i} row={row} />
        ))}
      </ul>
    </section>
  );
}

function PanelTab({ icon, label, active, className }: { icon: string; label: string; active?: boolean; className: string }) {
  return (
    <button
      type="button"
      className={clsx(
        "flex items-center text-[11px] whitespace-nowrap text-[#46464c]",
        active ? "bg-white" : "mask-r-from-70% mask-r-to-100%",
        className,
      )}
    >
      <Icon name={icon} className={active ? "h-[18px] w-4" : "size-[18px]"} />
      {label}
    </button>
  );
}

function SidePanel() {
  return (
    <aside className="flex w-[289px] shrink-0 flex-col bg-[#fefdfe]">
      <div className="flex h-[30px] shrink-0 bg-[#e7eaec]">
        <PanelTab icon="tree" label="Model Tree" active className="w-[98px] gap-1 pl-2.5" />
        <PanelTab icon="folders" label="Fold" className="ml-2 w-[52px] gap-1" />
        <PanelTab icon="favorite" label="Favo" className="ml-3 w-[52px] gap-1.5" />
        <PanelTab icon="history" label="Hist" className="ml-[11px] w-[54px] gap-1.5" />
      </div>
      <div className="flex min-h-0 flex-1 flex-col">
        <div className="basis-[399px] overflow-hidden">
          <Tree title="Drawing Tree" root="Sheet 1 of EXERCISE-62.DRW" rootIcon="sheet" rows={drawingRows} />
        </div>
        <div className="mr-1.5 ml-2 flex-1 border-t border-[#dedee0]">
          <div className="-mr-1.5 -ml-2 pt-1">
            <Tree title="Model Tree" root="EXERCISE-62.PRT" rootIcon="part" rows={modelRows} layer />
          </div>
        </div>
      </div>
    </aside>
  );
}

/* ---------- drawing sheet ---------- */

type DimProps = {
  a: number; // start of the dimension line
  b: number; // end of the dimension line
  at: number; // fixed coordinate of the dimension line
  t: number; // centre of the value
  value: string;
  color?: string;
};

function DimX({ a, b, at, t, value, color = INK }: DimProps) {
  return (
    <g>
      <path d={`M${a} ${at}H${b}`} stroke={color} opacity=".85" />
      <path d={`M${a} ${at}l5-2v4zM${b} ${at}l-5-2v4z`} fill={color} stroke="none" />
      <text x={t} y={at - 2} textAnchor="middle" fill={color} stroke="none">{value}</text>
    </g>
  );
}

function DimY({ a, b, at, t, value, color = INK }: DimProps) {
  return (
    <g>
      <path d={`M${at} ${a}V${b}`} stroke={color} opacity=".85" />
      <path d={`M${at} ${a}l-2 5h4zM${at} ${b}l-2-5h4z`} fill={color} stroke="none" />
      <text transform={`translate(${at - 2} ${t}) rotate(-90)`} textAnchor="middle" fill={color} stroke="none">{value}</text>
    </g>
  );
}

function Frame() {
  const cols = [672, 786, 900, 1014, 1128, 1242, 1356, 1470];
  const rows = ["A", "B", "C", "D", "E", "F"];
  return (
    <g>
      <rect x="592.5" y="231.5" width="957" height="677" fill="none" stroke="#2c8f83" />
      <path
        d="M593 232h22v11h-11v11h-11zM1549 232h-22v11h12v11h10zM593 908h22v-11h-11v-11h-11zM1549 908h-22v-11h12v-11h10z"
        fill="#000"
      />
      <path d="M626.500 896.500v-654H1538.500v654zM637.500 885.500v-631H1527.500v631z" fill="none" stroke="#5a5c62" />
      <path d="M626.500 242v655M1538.500 242v655" stroke="#000" />
      <path
        d="M728.500 243v11M842.500 243v11M956.500 243v11M1184.500 243v11M1298.500 243v11M1412.500 243v11M728.500 886v11M842.500 886v11M956.500 886v11M1184.500 886v11M1298.500 886v11M1412.500 886v11M1071.500 231v34M1071.500 875v34"
        stroke="#6a6c72"
      />
      <path
        d="M627 342.500h11M627 456.500h11M627 569.500h22M627 683.500h11M627 797.500h11M1527 342.500h11M1527 456.500h11M1516 569.500h22M1527 683.500h11M1527 797.500h11"
        stroke="#6a6c72"
      />
      <g fill="#111" fontSize="10" textAnchor="middle">
        {cols.map((x, i) => (
          <g key={x}>
            <text x={x} y="252">{i + 1}</text>
            <text x={x} y="895">{i + 1}</text>
          </g>
        ))}
        {rows.map((r, i) => (
          <g key={r}>
            <text x="632" y={287 + i * 114}>{r}</text>
            <text x="1533" y={287 + i * 114}>{r}</text>
          </g>
        ))}
      </g>
    </g>
  );
}

function FrontView() {
  return (
    <g fill="none">
      <path d="M770.500 405V371.500H816.500V405M941.500 405V371.500H987.500V405M765.500 405.500H993.500V428.500H765.500z" stroke={THIN} />
      <path d="M770.500 371.500h46M941.500 371.500h46M765.500 428.500h228" stroke={EDGE} />
      <path
        d="M770.500 322v43M987.500 322v43M816.500 341v24M941.500 341v24M993.500 385v15M765.500 434v19M993.500 434v19M738 405.500h21"
        stroke={THIN}
      />
      <path d="M721 371.500h44M721 428.500h38M742.500 400v34M981 389.500h37" stroke={INK} />
      <path d="M742.500 405l-2-5h4zM742.500 429l-2 5h4zM987 389.500l-5-2v4zM994 389.500l5-2v4z" fill={INK} />
      <DimX a={770.5} b={987.5} at={326.5} t={876} value="95" />
      <DimX a={770.5} b={816.5} at={345.5} t={795} value="20" />
      <DimX a={816.5} b={941.5} at={345.5} t={884} value="55" />
      <DimX a={941.5} b={987.5} at={345.5} t={963} value="20" />
      <DimX a={765.5} b={993.5} at={448.5} t={856} value="100" />
      <DimY a={371.5} b={428.5} at={725.5} t={402} value="25" />
      <g fill={INK}>
        <text transform="translate(741 415) rotate(-90)" textAnchor="middle">10</text>
        <text x="1010" y="388" textAnchor="middle">2.5</text>
      </g>
    </g>
  );
}

function TopView() {
  return (
    <g fill="none">
      <path d="M765.500 568.500H993.500V705.500H765.500zM771.500 574.500H987.500V699.500H771.500z" stroke={THIN} />
      <path d="M765.500 568.500h228M765.500 705.500h228" stroke={EDGE} />
      <path
        d="M816.500 574.500L771.500 619.500M942 574.500L987.500 619.500M771.500 654.500L816.500 699.500M987.500 654.500L942 699.500"
        stroke="#5d74a8"
        shapeRendering="auto"
      />
      <path
        d="M765.500 517v46M993.500 517v46M771.500 532v36M987.500 532v36M725 574.500h40M725 699.500h40M743 619.500h22M743 654.500h22M891.500 694v41"
        stroke={THIN}
      />
      <path d="M708 568.500h51M708 705.500h51M981 629.500h49" stroke={INK} />
      <path d="M816.500 548v20M941.500 548v20" stroke="#ea5a2c" />
      <path d="M987 629.500l-5-2v4zM994 629.500l5-2v4zM891.500 699l-2-5h4zM891.500 706l-2 5h4z" fill={INK} />
      <DimX a={765.5} b={993.5} at={521.5} t={876} value="100" />
      <DimX a={771.5} b={987.5} at={536.5} t={877} value="95" />
      <DimX a={771.5} b={816.5} at={552.5} t={791} value="20" />
      <DimX a={816.5} b={941.5} at={553.5} t={880} value="55" color="#ea5a2c" />
      <DimX a={941.5} b={987.5} at={553.5} t={968} value="20" />
      <DimY a={568.5} b={705.5} at={712.5} t={629} value="60" />
      <DimY a={574.5} b={699.5} at={729.5} t={629} value="55" />
      <DimY a={574.5} b={619.5} at={747.5} t={592} value="20" />
      <DimY a={619.5} b={654.5} at={747.5} t={634} value="15" />
      <DimY a={654.5} b={699.5} at={747.5} t={674} value="20" />
      <g fill={INK}>
        <text x="1021" y="628" textAnchor="middle">2.5</text>
        <text transform="translate(890 725) rotate(-90)" textAnchor="middle">2.5</text>
      </g>
    </g>
  );
}

function LeftView() {
  return (
    <g fill="none">
      <path d="M1192.500 574.500H1226.500V619.500H1192.500M1192.500 654.500H1226.500V699.500H1192.500M1192.500 568v137" stroke={THIN} />
      <path d="M1192 568.500H1169.500V705.500H1192M1226.500 575v44M1226.500 655v44" stroke={EDGE} />
      <path d="M1192.500 549v19M1232 574.500h39M1232 699.500h39M1232 619.500h22M1232 654.500h22M1209.500 694v47" stroke={THIN} />
      <path d="M1169.500 549v14M1226.500 549v19M1143 568.500h20M1143 705.500h20M1198 705.500h16M1164 553.500h29" stroke={INK} />
      <path d="M1169 553.500l-5-2v4zM1209.500 699l-2-5h4zM1209.500 706l-2 5h4z" fill={INK} />
      <DimX a={1192.5} b={1226.5} at={553.5} t={1207} value="15" />
      <DimY a={568.5} b={705.5} at={1147.5} t={635} value="60" />
      <DimY a={574.5} b={619.5} at={1248.5} t={593} value="20" />
      <DimY a={619.5} b={654.5} at={1248.5} t={636} value="15" />
      <DimY a={654.5} b={699.5} at={1248.5} t={674} value="20" />
      <DimY a={574.5} b={699.5} at={1267.5} t={642} value="55" />
      <g fill={INK}>
        <text x="1178" y="551" textAnchor="middle">10</text>
        <text transform="translate(1208 731) rotate(-90)" textAnchor="middle">2.5</text>
      </g>
    </g>
  );
}

function IsometricView() {
  return (
    <g>
      <g transform="translate(1110 310) scale(.33333)" stroke="#14181a" strokeWidth="2.500" strokeLinejoin="round" shapeRendering="auto">
        <path d="M141 444H770L791 488H160z" fill="#555" />
        <path d="M770 444L869 125L889 168L791 488z" fill="#b3ad5c" />
        <path d="M141 444L240 125H869L770 444z" fill="#00ea00" />
        <path d="M160 432L254 136H850L758 432z" fill="#0000f5" />
        <path d="M350 136H726L738 169H390z" fill="#005a00" />
        <path d="M216 238L234 276L220 326L198 298z" fill="#00a80c" />
        <path d="M220 73H345L187 181z" fill="#ee0000" />
        <path d="M345 73L391 170L233 274L187 181z" fill="#666" />
        <path d="M692 73L785 180L813 250L738 168z" fill="#444" />
        <path d="M818 73L850 140L816 246L785 180z" fill="#00ae00" />
        <path d="M692 73H818L785 180z" fill="#ee0000" />
        <path d="M162 263L250 369H129z" fill="#ee0000" />
        <path d="M129 369H250L287 432H160z" fill="#005a00" />
        <path d="M759 263L792 322L762 432L727 369z" fill="#00ae00" />
        <path d="M759 263L727 369H604z" fill="#ee0000" />
        <path d="M604 369H727L762 432H631z" fill="#005a00" />
      </g>
      <text x="1246" y="497" textAnchor="middle" fill={INK} fontSize="10">Isometric View</text>
    </g>
  );
}

const captions: [number, number, string][] = [
  [1119, 762, "Material:"],
  [1119, 783, "Finish:"],
  [1119, 802, "Unless Otherwise Stated:"],
  [1119, 808, "Linear Tol. ±0.2, Angular Tol. 0°15'"],
  [1119, 813, "Surface Finish: 0.8µm"],
  [1119, 819, "All Dimensions: mm"],
  [1119, 827, "Drawing Scale:"],
  [1121, 840, "Approx Weight:"],
  [1183, 841, "Drawing Produced In"],
  [1176, 847, "Accordance With:  BS8888"],
  [1119, 858, "Projection Method:"],
  [1132, 864, "FIRST ANGLE"],
  [1188, 857, "Sheet Size:"],
  [1256, 763, "This drawing and any information or"],
  [1256, 769, "descriptive material set out on it"],
  [1256, 775, "are the confidential and copyright property"],
  [1256, 780, "of Emilian Popa  & and MUST NOT BE"],
  [1256, 786, "DISCLOSED, COPIED, LOANED in whole or part"],
  [1256, 792, "or used for any purpose without the"],
  [1256, 797, "written permission ofEmilian Popa ."],
  [1256, 809, "Document Type:"],
  [1257, 840, "Legal Owner:"],
  [1386, 764, "Description:"],
  [1386, 800, "Drawn by:"],
  [1457, 800, "Drawn Date:"],
  [1386, 819, "Checked/Approved by:"],
  [1457, 819, "Checked/Approved Date:"],
  [1387, 840, "Part Number:"],
  [1387, 860, "Drawing Number"],
  [1470, 860, "Sheet:"],
  [1502, 860, "Revision"],
];

function TitleBlock() {
  return (
    <g fill="none">
      <path
        d="M1116.500 756V885M1116 777.500h137M1116 795.500h137M1116 820.500h267M1116 833.500h411M1116 851.500h137M1164.500 833v18M1184.500 851v34M1253.500 756v129M1253 803.500h130M1383.500 756v129M1383 792.500h144M1383 812.500h144M1383 853.500h144M1455.500 792v41M1465.500 853v32M1500.500 853v32M1116 756.500h411"
        stroke="#2c2d33"
      />
      <g fill="#000" fontSize="5" fontWeight="700" fontFamily="Liberation Sans, sans-serif">
        {captions.map(([x, y, text]) => (
          <text key={`${x}-${y}`} x={x} y={y}>{text}</text>
        ))}
        <text x="1267" y="873">B-dul Decebal nr 93 Bl U12 sc 1 ap 10</text>
      </g>
      <g fill="#222" fontFamily="Liberation Sans, sans-serif" fontSize="8">
        <text x="1180" y="831">1:1</text>
        <text x="1257" y="831">Emilian Popa Confidential</text>
        <text x="1146" y="849">Kg</text>
        <text x="1473" y="876">1 of 1</text>
      </g>
      <g fill="#222" fontFamily="Liberation Sans, sans-serif">
        <text x="1266" y="860" fontSize="10">Emilian Popa</text>
        <text x="1217" y="878" textAnchor="middle" fontSize="12">A3</text>
      </g>
      <g fill={INK} textAnchor="middle">
        <text x="1164" y="774">S235JR</text>
        <text x="1448" y="779">EXERCISE-62</text>
        <text x="1454" y="848">100-00-62</text>
        <text x="1426" y="877">100-00-62</text>
        <text x="1512" y="876">A</text>
      </g>
      <g stroke="#111" shapeRendering="auto">
        <path d="M1139.500 875.500l12-5v10.500l-12-3zM1137 875.500h33M1162.500 868v14" />
        <circle cx="1162.500" cy="875.500" r="5" />
        <circle cx="1162.500" cy="875.500" r="2.500" />
      </g>
    </g>
  );
}

function DrawingSheet() {
  return (
    <svg
      viewBox="592 231 958 678"
      width="958"
      height="678"
      className="mt-[26px] max-w-full shrink-0 font-['Liberation_Mono',monospace] text-[11px]"
      shapeRendering="crispEdges"
      role="img"
      aria-label="EXERCISE-62 drawing sheet"
    >
      <Frame />
      <FrontView />
      <TopView />
      <LeftView />
      <IsometricView />
      <TitleBlock />
    </svg>
  );
}

const viewTools = [
  ["zoomFit", "Refit"],
  ["zoomIn", "Zoom in"],
  ["zoomOut", "Zoom out"],
  ["repaint", "Repaint"],
  ["cube", "Display style"],
  ["savedView", "Saved views"],
  ["section", "Section"],
  ["datumFilter", "Datum display"],
  ["planeEye", "Plane display"],
  ["axisEye", "Axis display"],
  ["pointEye", "Point display"],
  ["csysEye", "Csys display"],
];

function Canvas() {
  return (
    <main className="flex min-w-0 flex-1 flex-col bg-[#e8eaee] pl-[3px]">
      <div className="flex min-h-0 flex-1 flex-col items-center overflow-hidden pt-[7px]">
        <div className="flex h-8 items-center border border-[#b1b3b7] bg-white px-[3px]">
          {viewTools.map(([icon, label]) => (
            <button
              key={icon}
              type="button"
              aria-label={label}
              className={clsx(
                "mx-px flex size-6 items-center justify-center border",
                icon === "pointEye" ? "border-[#bcbcbe] bg-[#e0e0e1]" : "border-transparent",
              )}
            >
              <Icon name={icon} />
            </button>
          ))}
        </div>
        <DrawingSheet />
        <p className="mt-auto flex self-start pl-4 font-['Liberation_Sans',sans-serif] text-xs leading-[17px] whitespace-nowrap text-[#8c8e98]">
          <span className="w-[99px]">SCALE : 1:1</span>
          <span className="w-[90px]">TYPE : PART</span>
          <span className="w-[139px]">NAME : EXERCISE-62</span>
          <span>SIZE : A3</span>
        </p>
      </div>
      <div className="h-1 border-t border-[#85858a]" />
      <div className="flex h-6 items-start border border-[#85858a] bg-[#dedede]">
        <div className="flex h-full items-center gap-2 pr-1.5 pl-[5px] text-[#555]">
          {[
            ["First sheet", "M5 0v8L0 4zM10 0v8L5 4z", ""],
            ["Previous sheet", "M8 0v8L2 4z", "text-[#9a9a9c]"],
            ["Next sheet", "M2 0v8l6-4z", "text-[#9a9a9c]"],
            ["Last sheet", "M0 0v8l5-4zM5 0v8l5-4z", ""],
          ].map(([label, d, tone]) => (
            <button key={label} type="button" aria-label={label} className={tone}>
              <svg viewBox="0 0 10 8" className="h-2 w-2.5"><path d={d} fill="currentColor" /></svg>
            </button>
          ))}
        </div>
        <button type="button" aria-label="New sheet" className="flex h-[18px] w-[19px] items-center justify-center border border-[#85858a] text-sm leading-4 font-bold text-[#444]">
          +
        </button>
        <button type="button" className="h-[22px] border-r border-b border-[#85858a] bg-[#f5f5f6] px-[17px] text-xs font-bold text-[#3a3a40]">
          Sheet 1
        </button>
      </div>
    </main>
  );
}

function StatusBar() {
  return (
    <footer className="flex h-[34px] shrink-0 items-center border-t border-[#b9b9bb] bg-white pl-1.5 text-[11px] text-[#3f3f46]">
      <button type="button" aria-label="Navigator" className="flex size-[22px] items-center justify-center border border-[#b9b9bb] bg-[#e2e2e3]">
        <Icon name="tree" />
      </button>
      <button type="button" aria-label="Browser" className="ml-[7px]"><Icon name="globe" /></button>
      <button type="button" aria-label="Full screen" className="ml-2.5"><Icon name="pane" /></button>
      <div className="ml-3 h-6 w-px bg-[#c9d3da]" />
      <svg viewBox="0 0 12 12" className="ml-0.5 size-3" aria-hidden="true">
        <path d="M1 4h5V1l5 5-5 5V8H1z" fill="#2fa2d4" stroke="#1d4f6d" />
      </svg>
      <span className="pl-0.5">Select LOCATION for note.</span>
      <div className="ml-auto flex items-center">
        <svg viewBox="0 0 26 10" className="h-2.5 w-[26px]" aria-hidden="true">
          <circle cx="5" cy="5" r="5" fill="#3ecb45" />
          <circle cx="14" cy="5" r="2.500" fill="#c3c3c5" />
          <circle cx="22" cy="5" r="2.500" fill="#c3c3c5" />
        </svg>
        <div className="ml-2 flex h-6 border border-[#c3c3c5]">
          <button type="button" aria-label="Find" className="flex w-[26px] items-center justify-center"><Icon name="binoculars" /></button>
          <CaretButton label="Find options" className="w-[14px] border-l border-[#c3c3c5]" />
        </div>
        <div className="relative mr-[18px] ml-[93px] flex h-[22px] w-[165px] border border-[#9d9da0]">
          <select aria-label="Selection filter" className="w-full appearance-none bg-transparent pl-1.5 outline-none">
            <option>General</option>
          </select>
          <span className="pointer-events-none absolute inset-y-0 right-0 flex w-[15px] items-center justify-center border-l border-[#b9b9bb]">
            <Caret />
          </span>
        </div>
      </div>
    </footer>
  );
}

export default function App() {
  return (
    <div className="h-screen border-b border-[#3b3b3d]">
      <div className="flex h-full flex-col overflow-hidden border-4 border-b-[3px] border-[#b8b8b9] bg-white font-['Open_Sans','Noto_Sans',sans-serif]">
        <TitleBar />
        <TabBar />
        <Ribbon />
        <div className="flex min-h-0 flex-1">
          <SidePanel />
          <Canvas />
        </div>
        <StatusBar />
      </div>
    </div>
  );
}
